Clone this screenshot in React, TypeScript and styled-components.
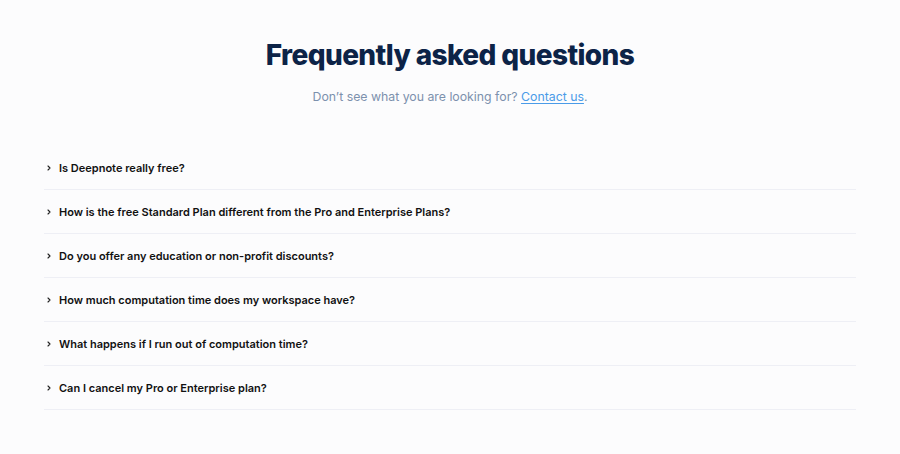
import styled, { createGlobalStyle } from 'styled-components';

const GlobalStyle = createGlobalStyle`
  html, body {
    margin: 0;
    padding: 0;
    background: #fcfcfd;
    font-family: Inter, 'Noto Sans', sans-serif;
  }
`;

const Page = styled.div`
  width: 900px;
  height: 454px;
  box-sizing: border-box;
  padding: 37px 44px 0;
  background: #fcfcfd;
`;

const Title = styled.h1`
  margin: 0;
  text-align: center;
  font-size: 28px;
  line-height: 36px;
  font-weight: 800;
  letter-spacing: -0.6px;
  color: #0c2347;
`;

const Subtitle = styled.p`
  margin: 15px 0 0;
  text-align: center;
  font-size: 12.3px;
  line-height: 18px;
  color: #7c91ad;

  a {
    color: #4a9be8;
    text-decoration: underline;
    text-underline-offset: 2px;
  }
`;

const List = styled.div`
  margin-top: 40px;
  display: flex;
  flex-direction: column;
`;

const Row = styled.div`
  display: flex;
  align-items: center;
  column-gap: 6px;
  height: 43px;
  border-bottom: 1px solid #eeeff5;
  font-size: 11px;
  font-weight: 600;
  color: #111;
`;

const Chevron = styled.svg`
  width: 8px;
  height: 8px;
  margin-left: 1px;
  flex-shrink: 0;
`;

const questions = [
  'Is Deepnote really free?',
  'How is the free Standard Plan different from the Pro and Enterprise Plans?',
  'Do you offer any education or non-profit discounts?',
  'How much computation time does my workspace have?',
  'What happens if I run out of computation time?',
  'Can I cancel my Pro or Enterprise plan?',
];

const App = () => {
  return (
    <>
      <GlobalStyle />
      <Page>
        <Title>Frequently asked questions</Title>
        <Subtitle>
          Don’t see what you are looking for? <a href="#">Contact us</a>.
        </Subtitle>
        <List>
          {questions.map((q) => (
            <Row key={q}>
              <Chevron viewBox="0 0 8 8" fill="none">
                <path d="M3 2l2 2-2 2" stroke="#222" strokeWidth="1.1" strokeLinecap="round" strokeLinejoin="round" />
              </Chevron>
              <span>{q}</span>
            </Row>
          ))}
        </List>
      </Page>
    </>
  );
};

export default App;
